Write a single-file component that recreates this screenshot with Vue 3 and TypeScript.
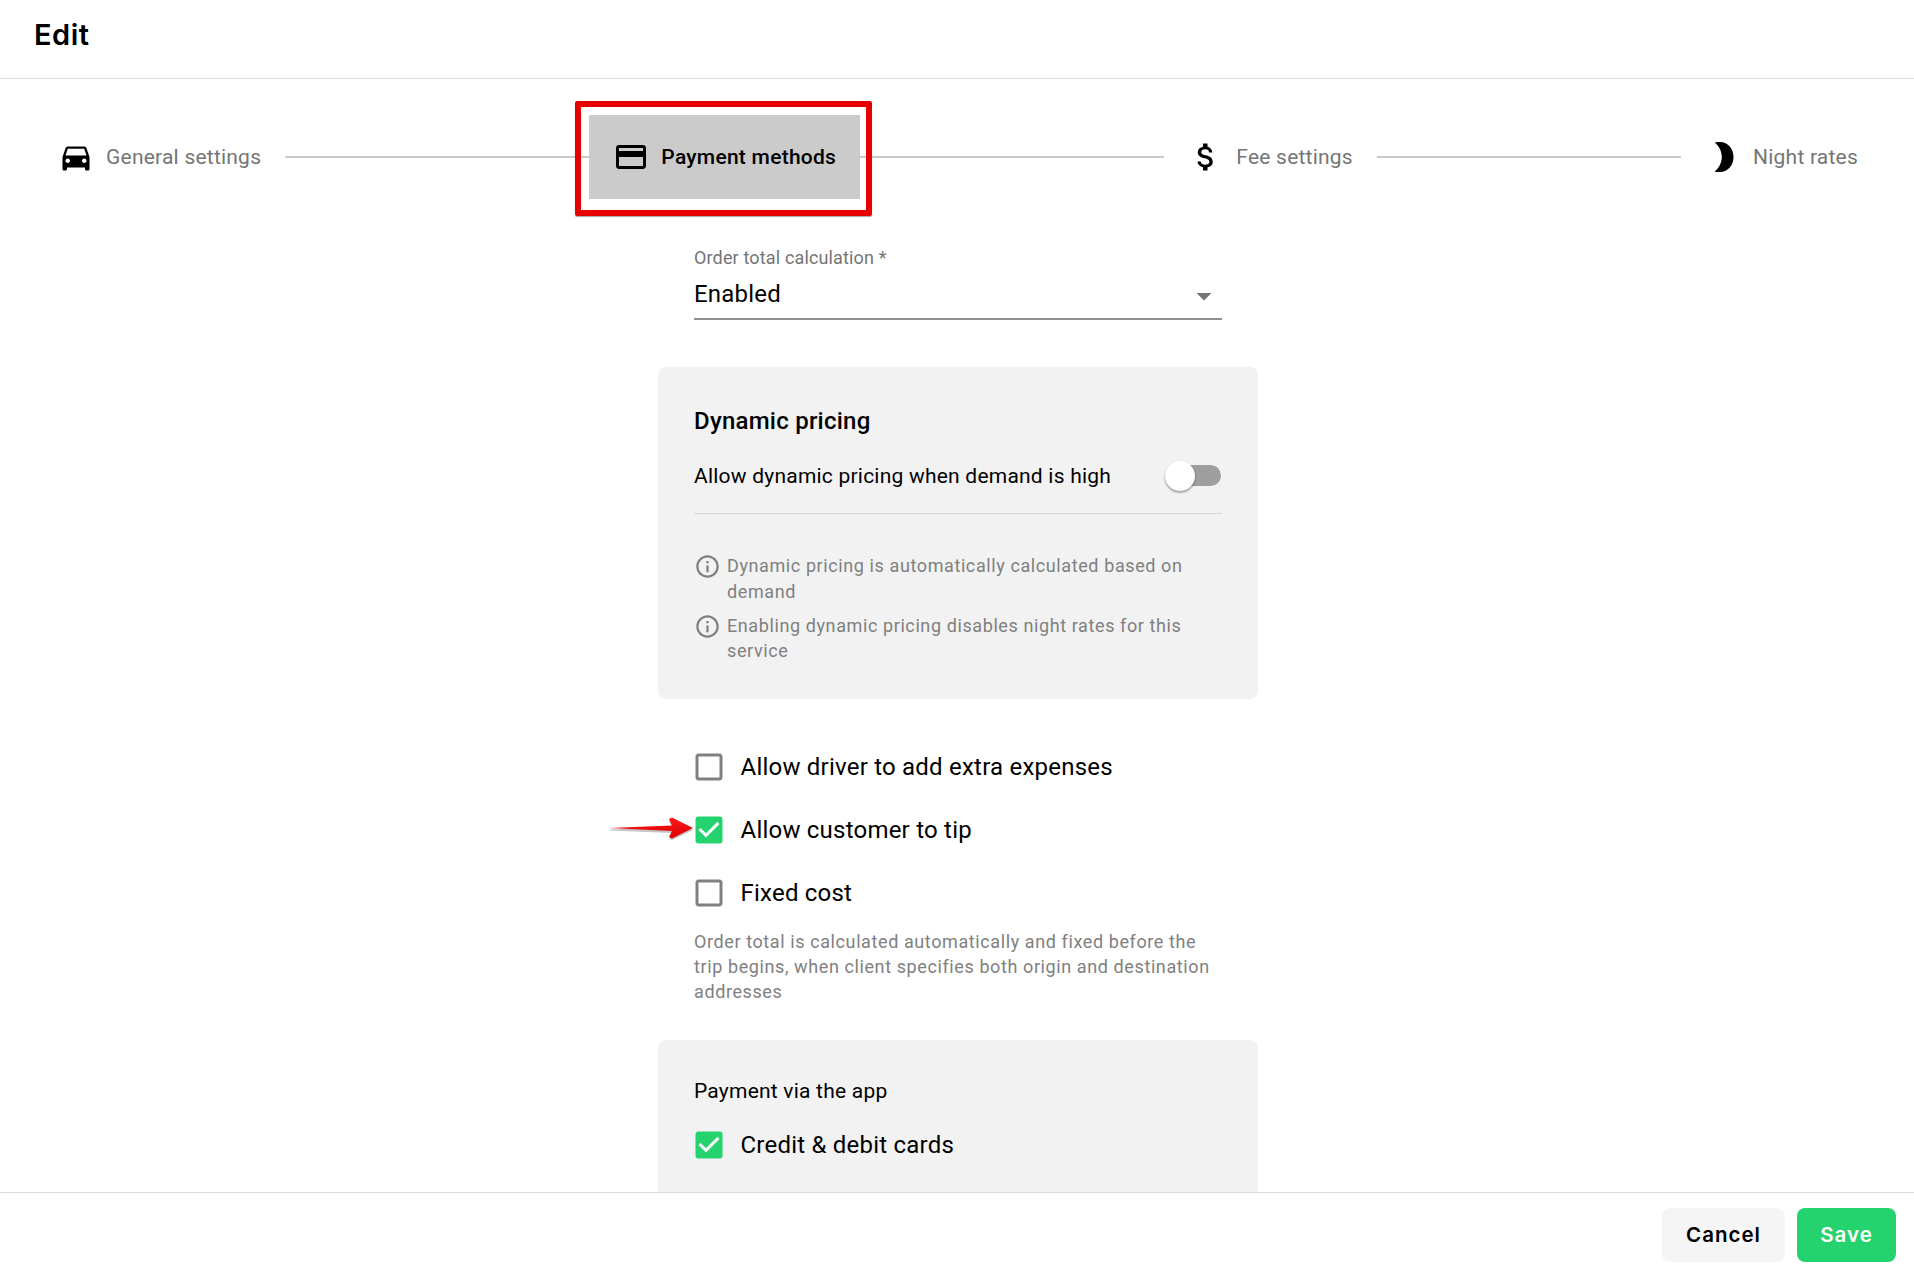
<script setup lang="ts">
const paths = {
  car: 'M18.92 6.01C18.72 5.42 18.16 5 17.5 5h-11c-.66 0-1.21.42-1.42 1.01L3 12v8c0 .55.45 1 1 1h1c.55 0 1-.45 1-1v-1h12v1c0 .55.45 1 1 1h1c.55 0 1-.45 1-1v-8l-2.08-5.99zM6.5 16c-.83 0-1.5-.67-1.5-1.5S5.67 13 6.5 13s1.5.67 1.5 1.5S7.33 16 6.5 16zm11 0c-.83 0-1.5-.67-1.5-1.5s.67-1.5 1.5-1.5 1.5.67 1.5 1.5-.67 1.5-1.5 1.5zM5 11l1.5-4.5h11L19 11H5z',
  card: 'M20 4H4c-1.11 0-1.99.89-1.99 2L2 18c0 1.11.89 2 2 2h16c1.11 0 2-.89 2-2V6c0-1.11-.89-2-2-2zm0 14H4v-6h16v6zm0-10H4V6h16v2z',
  money: 'M11.8 10.9c-2.27-.59-3-1.2-3-2.15 0-1.09 1.01-1.85 2.7-1.85 1.78 0 2.44.85 2.5 2.1h2.21c-.07-1.72-1.12-3.3-3.21-3.81V3h-3v2.16c-1.94.42-3.5 1.68-3.5 3.61 0 2.31 1.91 3.46 4.7 4.13 2.5.6 3 1.48 3 2.41 0 .69-.49 1.79-2.7 1.79-2.06 0-2.87-.92-2.98-2.1h-2.2c.12 2.19 1.76 3.42 3.68 3.83V21h3v-2.15c1.95-.37 3.5-1.5 3.5-3.55 0-2.84-2.43-3.81-4.7-4.4z',
  moon: 'M6.4 2.200C8 2 9 2 10 2c5.500 0 9 4.700 9 10S15.500 22 10 22c-1 0-2 0-3.600-.2C9.200 19.400 11.200 16 11.200 12S9.200 4.600 6.400 2.200z',
}
const steps = [
  { label: 'General settings', icon: paths.car, active: false },
  { label: 'Payment methods', icon: paths.card, active: true },
  { label: 'Fee settings', icon: paths.money, active: false },
  { label: 'Night rates', icon: paths.moon, active: false },
]
const infos = [
  'Dynamic pricing is automatically calculated based on demand',
  'Enabling dynamic pricing disables night rates for this service',
]
const checks = [
  { label: 'Allow driver to add extra expenses', on: false, arrow: false },
  { label: 'Allow customer to tip', on: true, arrow: true },
  { label: 'Fixed cost', on: false, arrow: false },
]
</script>

<template>
  <div class="page">
    <header class="head"><h1>Edit</h1></header>

    <main class="body">
      <nav class="stepper">
        <template v-for="(s, i) in steps" :key="s.label">
          <div v-if="i > 0" class="line"></div>
          <div class="step" :class="{ active: s.active }">
            <svg class="step-icon" viewBox="0 0 24 24"><path :d="s.icon" /></svg>
            <span>{{ s.label }}</span>
            <div v-if="s.active" class="mark"></div>
          </div>
        </template>
      </nav>

      <div class="column">
        <div class="select">
          <div class="select-label">Order total calculation *</div>
          <div class="select-value">
            <span>Enabled</span>
            <svg class="caret" viewBox="0 0 24 24"><path d="M7 10l5 5 5-5z" /></svg>
          </div>
        </div>

        <section class="panel dynamic">
          <h2>Dynamic pricing</h2>
          <div class="toggle-row">
            <span>Allow dynamic pricing when demand is high</span>
            <div class="switch"><i class="track"></i><i class="thumb"></i></div>
          </div>
          <div class="infos">
            <div v-for="t in infos" :key="t" class="info">
              <svg class="info-icon" viewBox="0 0 24 24"><path d="M11 7h2v2h-2zm0 4h2v6h-2zm1-9C6.480 2 2 6.480 2 12s4.480 10 10 10 10-4.480 10-10S17.520 2 12 2zm0 18c-4.410 0-8-3.590-8-8s3.590-8 8-8 8 3.590 8 8-3.590 8-8 8z" /></svg>
              <span>{{ t }}</span>
            </div>
          </div>
        </section>

        <div class="checks">
          <label v-for="c in checks" :key="c.label" class="check">
            <svg v-if="c.arrow" class="arrow" viewBox="0 0 84 24">
              <defs>
                <linearGradient id="arrowFill" x1="0" y1="0" x2="0" y2="1">
                  <stop offset="0" stop-color="#ff1a1a" />
                  <stop offset="1" stop-color="#d80000" />
                </linearGradient>
              </defs>
              <path d="M-2 13.500L60 16l-3 6 3 1 21-10L60 3l-3 1 3 6.500L-2 12.500z" fill="#8a8a8a" opacity=".5" transform="translate(0 1)" />
              <path d="M-3 12L60 9.500 57 3l3-1.500L81 12 60 22.500 57 21l3-6z" fill="url(#arrowFill)" />
            </svg>
            <svg class="box" viewBox="0 0 24 24">
              <template v-if="c.on">
                <rect x="3" y="3" width="18" height="18" rx="2" fill="#25d36e" />
                <path d="M10 17l-5-5 1.410-1.410L10 14.170l7.590-7.590L19 8z" fill="#fff" />
              </template>
              <path v-else d="M19 5v14H5V5h14m0-2H5c-1.100 0-2 .9-2 2v14c0 1.100.9 2 2 2h14c1.100 0 2-.9 2-2V5c0-1.100-.9-2-2-2z" fill="#808080" />
            </svg>
            <span>{{ c.label }}</span>
          </label>
        </div>
        <p class="note">Order total is calculated automatically and fixed before the trip begins, when client specifies both origin and destination addresses</p>

        <section class="panel pay">
          <div class="pay-title">Payment via the app</div>
          <label class="check">
            <svg class="box" viewBox="0 0 24 24">
              <rect x="3" y="3" width="18" height="18" rx="2" fill="#25d36e" />
              <path d="M10 17l-5-5 1.410-1.410L10 14.170l7.590-7.590L19 8z" fill="#fff" />
            </svg>
            <span>Credit &amp; debit cards</span>
          </label>
        </section>
      </div>
    </main>

    <footer class="foot">
      <button class="btn cancel" type="button">Cancel</button>
      <button class="btn save" type="button">Save</button>
    </footer>
  </div>
</template>

<style scoped>
.page {
  height: 1274px;
  display: flex;
  flex-direction: column;
  background: #fff;
  font-family: Roboto, "Liberation Sans", sans-serif;
  color: #000;
  overflow: hidden;
}
.head {
  flex: none;
  height: 78px;
  padding: 0 34px;
  display: flex;
  align-items: center;
  border-bottom: 1px solid #dcdcdc;
}
.head h1 {
  margin: -8px 0 0;
  font: 600 29px/36px Inter, "Open Sans", sans-serif;
  letter-spacing: 0.5px;
}
.body {
  flex: 1;
  min-height: 0;
  overflow: hidden;
}
.stepper {
  display: flex;
  align-items: center;
  padding: 36px 32px 0 34px;
}
.line {
  flex: 1;
  height: 2px;
  background: #cacaca;
}
.step {
  position: relative;
  flex: none;
  display: flex;
  align-items: center;
  gap: 12px;
  padding: 24px;
  font-size: 21px;
  line-height: 36px;
  letter-spacing: 0.22px;
  color: #757575;
}
.step.active {
  background: #cbcbcb;
  color: #000;
  font-weight: 500;
  letter-spacing: 0.26px;
}
.step-icon {
  width: 36px;
  height: 36px;
  fill: #000;
}
.mark {
  position: absolute;
  top: -14px;
  right: -12px;
  bottom: -17px;
  left: -14px;
  border: 6px solid #e60000;
  border-radius: 2px;
  box-shadow: 0 1px 1px rgba(0, 0, 0, 0.35);
}
.column {
  width: 600px;
  margin: 0 auto;
  position: relative;
  left: 1px;
}
.select {
  margin: 47px 36px 0;
  border-bottom: 2px solid #8f8f8f;
  height: 72px;
}
.select-label {
  font-size: 18px;
  line-height: 24px;
  letter-spacing: 0.15px;
  color: #757575;
}
.select-value {
  display: flex;
  align-items: center;
  justify-content: space-between;
  height: 36px;
  margin-top: 6px;
  font-size: 24px;
  letter-spacing: 0.22px;
}
.caret {
  width: 36px;
  height: 36px;
  fill: #757575;
  margin-right: 0.500px;
  position: relative;
  top: 2px;
}
.panel {
  background: #f2f2f2;
  border-radius: 8px;
  padding: 0 36px;
}
.dynamic {
  margin-top: 47px;
  padding-top: 38px;
  padding-bottom: 35px;
}
.dynamic h2 {
  margin: 0;
  font-size: 24px;
  line-height: 32px;
  font-weight: 500;
  letter-spacing: 0.24px;
}
.toggle-row {
  display: flex;
  align-items: center;
  justify-content: space-between;
  height: 30px;
  margin-top: 24px;
  padding-bottom: 22px;
  box-sizing: content-box;
  border-bottom: 1px solid #d6d6d6;
  font-size: 21px;
  letter-spacing: 0.22px;
}
.switch {
  position: relative;
  width: 56px;
  height: 30px;
  margin-right: 1px;
}
.track {
  position: absolute;
  right: 0;
  top: 4px;
  width: 51px;
  height: 21px;
  border-radius: 11px;
  background: #9e9e9e;
}
.thumb {
  position: absolute;
  left: 0;
  top: 0;
  width: 30px;
  height: 30px;
  border-radius: 50%;
  background: #fff;
  box-shadow: 0 2px 2px rgba(0, 0, 0, 0.24), 0 1px 3px rgba(0, 0, 0, 0.16);
}
.infos {
  margin-top: 39px;
  display: flex;
  flex-direction: column;
  gap: 8.500px;
}
.info {
  display: flex;
  gap: 6px;
  font-size: 18px;
  line-height: 25.5px;
  letter-spacing: 0.6px;
  color: #808080;
}
.info-icon {
  flex: none;
  width: 27px;
  height: 27px;
  fill: #808080;
}
.checks {
  margin-top: 37px;
  padding: 0 36px;
}
.check {
  position: relative;
  display: flex;
  align-items: center;
  gap: 14px;
  height: 63px;
  margin-left: -3.500px;
  font-size: 24px;
  letter-spacing: 0.22px;
}
.box {
  flex: none;
  width: 36px;
  height: 36px;
}
.arrow {
  position: absolute;
  left: -79px;
  top: 17px;
  width: 84px;
  height: 24px;
  overflow: visible;
}
.note {
  margin: 4px 36px 0;
  font-size: 18px;
  line-height: 25px;
  letter-spacing: 0.6px;
  color: #808080;
}
.pay {
  margin-top: 36.500px;
  padding-top: 36px;
  padding-bottom: 80px;
}
.pay-title {
  font-size: 21px;
  line-height: 30px;
  letter-spacing: 0.22px;
  margin-bottom: 7.500px;
}
.foot {
  flex: none;
  height: 82px;
  box-sizing: border-box;
  border-top: 1px solid #dcdcdc;
  padding: 15px 18px 0 0;
  display: flex;
  justify-content: flex-end;
  align-items: flex-start;
  gap: 12px;
  background: #fff;
}
.btn {
  height: 54px;
  border: 0;
  border-radius: 8px;
  font: 600 20.500px/52px Inter, "Open Sans", sans-serif;
  letter-spacing: 1px;
  padding: 0;
}
.cancel {
  width: 123px;
  background: #f5f5f5;
  color: #000;
}
.save {
  width: 99px;
  background: #25d36e;
  color: #fff;
}
</style>
